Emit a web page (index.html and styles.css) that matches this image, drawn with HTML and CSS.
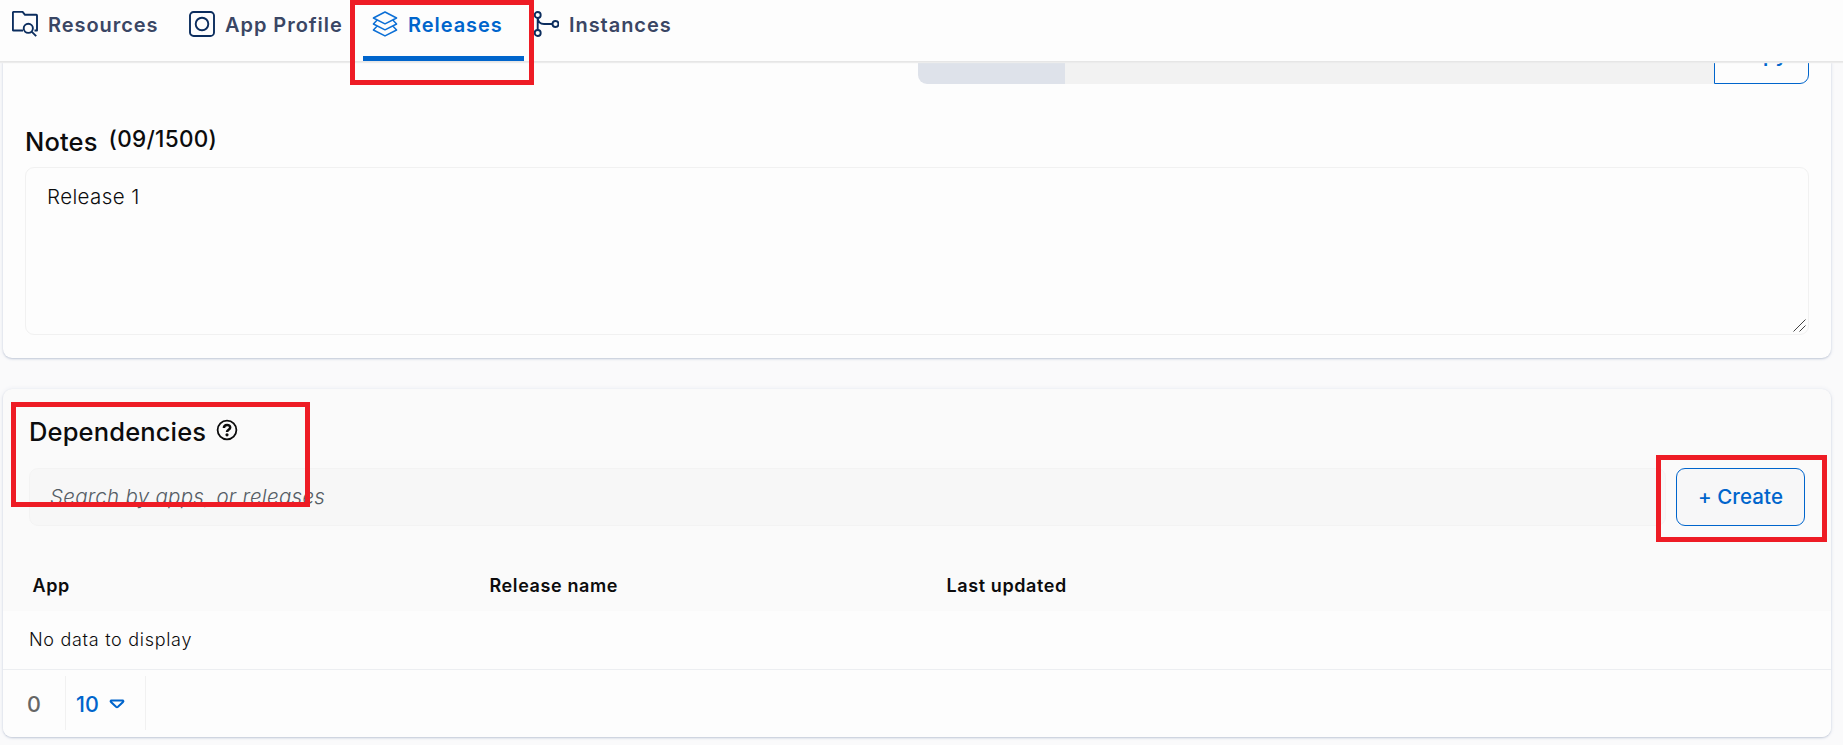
FILE: index.html
```html
<!DOCTYPE html>
<html lang="en">
<head>
<meta charset="utf-8">
<title>Releases</title>
<link rel="stylesheet" href="styles.css">
</head>
<body>
<nav class="tabs">
  <a class="tab tab-resources"><svg class="icon" viewBox="0 0 26 26"><path d="M11 19.5H1.5Q.9 19.5.9 18.9V1.7Q.9.9 1.7.9H10.6L13 3.8H24.3Q25 3.8 25 4.5V19.5H22.5"/><circle cx="16.3" cy="17.3" r="4.6"/><path d="M19.6 20.6 24.2 25.1"/></svg><span>Resources</span></a>
  <a class="tab tab-profile"><svg class="icon" viewBox="0 0 26 26"><rect x="1" y="1" width="24" height="24" rx="3.6"/><circle cx="13" cy="13" r="6.3"/></svg><span>App Profile</span></a>
  <a class="tab tab-releases"><svg class="icon icon-thin" viewBox="0 0 26 26"><path d="M13 1 24.6 7 13 12.8 1.4 7Z"/><path d="M5.2 9 1.4 13 13 18.8 24.6 13 20.8 9M5.2 15 1.4 19 13 24.9 24.6 19 20.8 15"/></svg><span>Releases</span></a>
  <a class="tab tab-instances"><svg class="icon" viewBox="0 0 26 26"><circle cx="4.7" cy="4" r="3"/><circle cx="4.7" cy="22" r="3"/><circle cx="22.5" cy="13" r="3"/><path d="M4.7 7V19M4.7 7Q5.2 13 11 13H19.5"/></svg><span>Instances</span></a>
</nav>
<main class="content">
  <section class="card notes-card">
    <div class="id-row">
      <span class="id-label">Release Id</span>
      <span class="id-value">01FZGSBTZF1G2ZZFHZSSKTAHGZH</span>
      <button class="copy">Copy</button>
    </div>
    <div class="notes-head"><h2 class="title">Notes</h2><span class="count">(09/1500)</span></div>
    <div class="notes-box">Release 1<svg class="grip" viewBox="0 0 13 13"><path d="M.5 12.5 12.5.5M6.5 12.5 12.5 6.5"/></svg></div>
  </section>
  <section class="card deps-card">
    <div class="deps-head"><h2 class="title">Dependencies</h2><svg class="help" viewBox="0 0 22 22"><circle cx="11" cy="11" r="9.4"/><path class="mark" d="M7.9 9C7.9 4.9 14.2 5 14.2 8.5 14.2 10.8 11 10.7 11 13"/><circle class="dot" cx="11" cy="15.8" r="1.6"/></svg></div>
    <div class="search-row"><div class="search">Search by apps, or releases</div><button class="create">+ Create</button></div>
    <div class="table-head"><span>App</span><span>Release name</span><span>Last updated</span><span></span></div>
    <div class="empty">No data to display</div>
    <div class="pager"><span class="total">0</span><span class="size">10<svg class="caret" viewBox="0 0 16 10"><path d="M2 1.5H14Q14.8 2 14 3L9 7.8Q8 8.6 7 7.8L2 3Q1.2 2 2 1.5Z"/></svg></span></div>
  </section>
</main>
<div class="mark-box mark-tab"></div>
<div class="mark-box mark-deps"></div>
<div class="mark-box mark-create"></div>
</body>
</html>
```
FILE: styles.css
```css
* { box-sizing: border-box; }
body { margin: 0; height: 745px; overflow: hidden; display: flex; flex-direction: column; background: #fafafb; color: #0c0c0d; font-family: Inter, "Liberation Sans", sans-serif; position: relative; }
.tabs { height: 62px; flex: none; display: flex; background: #fdfdfd; border-bottom: 1px solid #e6e6e6; box-shadow: 0 1px 1px #ececec; padding-left: 12px; position: relative; z-index: 1; }
.tab { display: flex; align-items: flex-start; height: 61px; color: #3a4664; font-size: 20px; font-weight: 600; letter-spacing: .95px; line-height: 50px; white-space: nowrap; }
.icon { width: 26px; height: 26px; margin: 11px 10px 0 0; flex: none; fill: none; stroke: #0b2d5e; stroke-width: 1.9; stroke-linejoin: round; }
.icon-thin { stroke: #0b6fd6; stroke-width: 1.5; }
.tab-resources { width: 177px; }
.tab-profile { width: 174px; }
.tab-releases { width: 161px; padding-left: 9px; color: #0065cc; border-bottom: 5px solid #0065cc; }
.tab-instances { padding-left: 9px; }
.content { flex: 1; padding-left: 3px; display: flex; flex-direction: column; gap: 31px; }
.card { width: 1828px; background: #fdfdfd; border-radius: 9px; box-shadow: 0 1px 2px #c3cad8, 0 0 5px #e9ebf2; flex: none; }
.notes-card { height: 296px; border-radius: 0 0 9px 9px; padding: 0 22px; }
.id-row { height: 22px; margin-left: 893px; display: flex; align-items: flex-end; white-space: nowrap; font-size: 20px; line-height: 58px; }
.id-label { width: 147px; height: 58px; background: #dee2ea; border-radius: 9px 0 0 9px; padding-left: 22px; font-weight: 500; letter-spacing: .8px; color: #8d939e; }
.id-value { flex: 1; height: 58px; background: #f2f2f2; padding-left: 24px; color: #999; }
.copy { width: 95px; height: 58px; border: 1px solid #0065cc; border-radius: 0 9px 9px 0; background: #fdfdfd; color: #0065cc; font: 600 20px Inter, sans-serif; letter-spacing: .5px; padding: 0; }
.notes-head { height: 83px; padding-top: 42px; display: flex; align-items: flex-start; gap: 11px; }
.title { margin: 0; font-size: 25.5px; font-weight: 550; letter-spacing: .15px; line-height: 32px; }
.count { font-size: 22.5px; font-weight: 500; letter-spacing: .3px; line-height: 26px; }
.notes-box { position: relative; height: 168px; border: 1px solid #f1f1f1; border-radius: 9px; padding: 14px 21px; font-size: 20.5px; font-weight: 300; letter-spacing: .4px; line-height: 30px; }
.grip { position: absolute; right: 2px; bottom: 2px; width: 13px; height: 13px; fill: none; stroke: #444; stroke-width: 1; }
.deps-card { height: 348px; background: #fafafa; overflow: hidden; display: flex; flex-direction: column; }
.deps-card > * { flex: none; }
.deps-head { height: 79px; padding: 27px 0 0 26px; display: flex; align-items: flex-start; gap: 10px; }
.help { width: 22px; height: 22px; margin-top: 3px; fill: none; stroke: #0c0c0d; stroke-width: 1.8; }
.mark { stroke-width: 2.5; }
.dot { fill: #0c0c0d; stroke: none; }
.search-row { display: flex; gap: 10px; padding: 0 26px; height: 58px; }
.search { flex: 1; background: #f7f7f7; border: 1px solid #f3f3f3; border-radius: 9px; padding-left: 20px; font-size: 20.5px; font-style: italic; font-weight: 300; letter-spacing: .3px; line-height: 56px; color: #555d65; }
.create { width: 129px; border: 1px solid #0065cc; border-radius: 9px; background: #f7f7f8; color: #0065cc; font: 550 20.5px Inter, sans-serif; letter-spacing: .1px; padding: 0 0 2px; white-space: nowrap; }
.table-head { height: 85px; padding-top: 45px; display: grid; grid-template-columns: repeat(4, 457px); font-size: 18px; font-weight: 560; letter-spacing: .6px; line-height: 30px; }
.table-head span { padding-left: 29.5px; }
.empty { height: 59px; background: #fdfdfd; border-bottom: 1px solid #eceef1; padding-left: 26px; font-size: 18px; font-weight: 300; letter-spacing: .7px; line-height: 58px; }
.pager { height: 67px; background: #fdfdfd; display: flex; padding: 6px 0 7px; font-size: 21.5px; font-weight: 500; line-height: 56px; }
.total { width: 63px; padding-left: 24px; border-right: 1px solid #f1f1f1; color: #666; }
.size { width: 80px; padding: 1px 0 0 10px; display: flex; align-items: center; gap: 10px; border-right: 1px solid #f1f1f1; color: #0065cc; font-weight: 550; }
.caret { width: 16px; height: 10px; fill: none; stroke: #0065cc; stroke-width: 2; }
.mark-box { position: absolute; z-index: 2; border: 5px solid #ee1c25; }
.mark-tab { left: 350px; top: 0; width: 184px; height: 85px; }
.mark-deps { left: 11px; top: 402px; width: 299px; height: 105px; }
.mark-create { left: 1656px; top: 455px; width: 171px; height: 87px; }
```
